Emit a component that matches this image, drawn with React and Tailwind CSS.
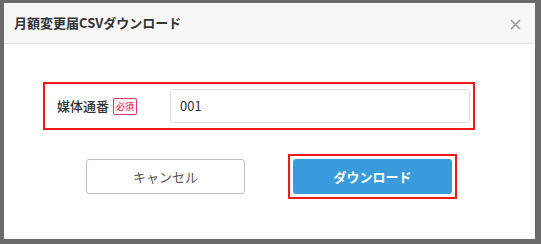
export default function App() {
  return (
    <div
      className="w-[541px] h-[244px] bg-[#6a6a6a] pt-[3px] pl-[4px] overflow-hidden"
      style={{ fontFamily: '"Noto Sans CJK JP", "Noto Sans", sans-serif' }}
    >
      <div className="w-[531px] h-[236px] bg-white flex flex-col">
        {/* HEADER */}
        <div className="h-[41px] bg-[#f7f7f7] border-b border-[#e3e3e3] flex items-center justify-between pl-[10px] pr-[14px] shrink-0">
          <span className="text-[13px] font-bold text-[#333]">月額変更届CSVダウンロード</span>
          <svg width="11" height="11" viewBox="0 0 11 11" className="mt-[2px]">
            <path d="M1 1L10 10M10 1L1 10" stroke="#9a9a9a" strokeWidth="1.6" />
          </svg>
        </div>

        {/* FIELD */}
        <div className="ml-[39px] mt-[38px] w-[432px] h-[48px] border-2 border-[#f01818] flex items-center pl-[12px] pr-[3px]">
          <div className="w-[113px] flex items-center gap-[4px] shrink-0">
            <span className="text-[13px] font-medium text-[#333]">媒体通番</span>
            <span className="text-[9px] leading-none font-medium text-[#e8336b] bg-[#fff5f8] border border-[#e8336b] rounded-[2px] px-[2px] py-[3px]">必須</span>
          </div>
          <div className="flex-1 h-[34px] border border-[#dcdcdc] rounded-[3px] flex items-center pl-[9px] text-[13px] text-[#333]">
            001
          </div>
        </div>

        {/* BUTTONS */}
        <div className="flex items-center gap-[43px] mt-[24px] pl-[82px]">
          <button className="w-[159px] h-[35px] border border-[#bdbdbd] rounded-[3px] bg-white text-[13px] text-[#555]">
            キャンセル
          </button>
          <div className="border-2 border-[#f01818] p-[3px]">
            <button className="block w-[159px] h-[35px] rounded-[3px] bg-[#3a9bdc] text-[13px] font-bold text-white">
              ダウンロード
            </button>
          </div>
        </div>
      </div>
    </div>
  )
}
